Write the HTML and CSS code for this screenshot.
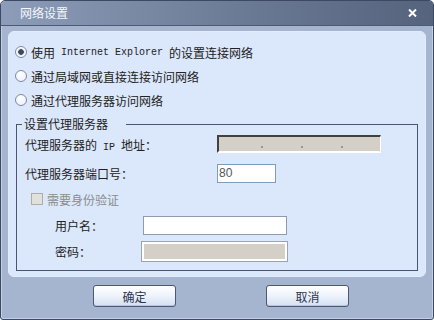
FILE: index.html
```html
<!DOCTYPE html>
<html>
  <head>
    <meta charset="utf-8">
    <title>网络设置</title>
    <link rel="stylesheet" href="styles.css">
  </head>
  <body>
    <div class="dialog">
      <div class="titlebar">
        <span class="title">网络设置</span>
        <svg class="close" width="9" height="8" viewBox="0 0 9 8">
          <path d="M1 0.5 L8 7.5 M8 0.5 L1 7.5" stroke="#fff" stroke-width="2"/>
        </svg>
      </div>

      <div class="panel">
        <label class="option"><input type="radio" name="mode" checked>使用<span class="latin"> Internet Explorer </span>的设置连接网络</label>
        <label class="option"><input type="radio" name="mode">通过局域网或直接连接访问网络</label>
        <label class="option"><input type="radio" name="mode">通过代理服务器访问网络</label>

        <fieldset class="proxy">
          <legend>设置代理服务器</legend>
          <div class="row">
            <span class="label">代理服务器的<span class="latin"> IP </span>地址：</span>
            <div class="ipbox"><i></i><i></i><i></i></div>
          </div>
          <div class="row row-port">
            <span class="label">代理服务器端口号：</span>
            <input class="port" value="80">
          </div>
          <div class="row row-check">
            <span class="checkbox"></span>
            <span class="disabled">需要身份验证</span>
          </div>
          <div class="row row-user">
            <span class="label">用户名：</span>
            <input class="text">
          </div>
          <div class="row row-user">
            <span class="label">密码：</span>
            <input class="text off" type="password" disabled>
          </div>
        </fieldset>
      </div>

      <div class="buttons">
        <button>确定</button>
        <button>取消</button>
      </div>
    </div>
  </body>
</html>
```

FILE: styles.css
```css
body { margin: 0; font-family: "Noto Sans CJK SC", "DejaVu Sans", sans-serif; font-size: 12px; color: #222; }

.dialog {
  width: 434px;
  height: 320px;
  box-sizing: border-box;
  border: 1px solid #3d4963;
  border-radius: 5px 5px 3px 3px;
  background: #a5b5d0;
  box-shadow: inset 0 0 0 1px #c3cfe3;
  overflow: hidden;
}

.titlebar {
  display: flex;
  align-items: center;
  justify-content: space-between;
  padding: 0 16px 0 19px;
  background: linear-gradient(to right, #8d9db9, #6b7a95 55%, #55637d);
  border-bottom: 1px solid #4d5a74;
  box-sizing: border-box;
  height: 26px;
  margin-top: -1px;
}
.title { color: #f4f7fb; font-size: 12px; line-height: 14px; }
.close { display: block; }

.panel {
  margin: 5px 7px 0 7px;
  height: 246px;
  box-sizing: border-box;
  padding-top: 8px;
  background: #dbe7fb;
  border-radius: 6px;
  border: 1px solid #e3ecfc;
}

.option {
  display: flex;
  align-items: center;
  height: 24px;
  padding-left: 6px;
  white-space: pre;
}
.latin { font-family: "Liberation Mono", monospace; font-size: 10px; }

.option input {
  appearance: none;
  margin: 0 4px 0 0;
  width: 12px;
  height: 12px;
  border-radius: 50%;
  border: 1px solid #7d8aa3;
  background: radial-gradient(circle at 40% 35%, #fff, #e8edf6);
}
.option input:checked {
  background: radial-gradient(circle, #3c4a66 0, #3c4a66 2.5px, #c9d2e2 3px, #fff 4px, #eef2f8);
}

.proxy {
  margin: 4px 7px 0 7px;
  padding: 0 0 8px 5px;
  border: 1px solid #4a5570;
  min-width: 0;
}
.proxy legend {
  padding: 0 18px 0 2px;
  line-height: 16px;
}

.row {
  display: flex;
  align-items: center;
  height: 22px;
  margin-top: 4px;
  padding-left: 3px;
}
.row:first-of-type { margin-top: 1px; }
.row-port { margin-top: 7px; }
.label { width: 192px; flex: none; white-space: pre; }

.ipbox {
  width: 164px;
  height: 18px;
  box-sizing: border-box;
  background: #d5d0c7;
  border-top: 2px solid #404040;
  border-left: 2px solid #404040;
  border-bottom: 2px solid #fff;
  border-right: 1px solid #fff;
  display: flex;
  align-items: flex-end;
  padding: 0 0 3px 42px;
  gap: 38px;
}
.ipbox i { width: 2px; height: 2px; background: #9a968e; }

.port {
  width: 59px;
  height: 19px;
  box-sizing: border-box;
  border: 1px solid #7f9db9;
  padding: 0 1px;
  font-family: "Liberation Sans", sans-serif;
  font-size: 12px;
  color: #555;
}

.row-check { padding-left: 9px; }
.checkbox {
  width: 12px;
  height: 12px;
  box-sizing: border-box;
  border: 1px solid #aeaea6;
  background: #e1e1db;
  margin-right: 4px;
}
.disabled { color: #8c8c8c; }

.row-user { padding-left: 33px; }
.row-user .label { width: 88px; }
.text {
  width: 144px;
  height: 19px;
  box-sizing: border-box;
  border: 1px solid #8d9ab0;
  background: #fff;
  padding: 0;
}
.text.off {
  width: 145px;
  margin-left: -1px;
  background: #d5d0c7;
  border: 2px solid #fff;
  box-shadow: 0 0 0 1px #9aa3b4;
}

.buttons {
  display: flex;
  gap: 90px;
  padding: 8px 0 0 92px;
}
.buttons button {
  width: 83px;
  height: 22px;
  border: 1px solid #4d5872;
  border-radius: 3px;
  background: linear-gradient(#ffffff, #eef3fb 50%, #d4dff2);
  box-shadow: inset 0 -1px 0 #b6c3da;
  font-family: "Noto Sans CJK SC", sans-serif;
  font-size: 12px;
  color: #2b3550;
  padding: 0;
}
```
